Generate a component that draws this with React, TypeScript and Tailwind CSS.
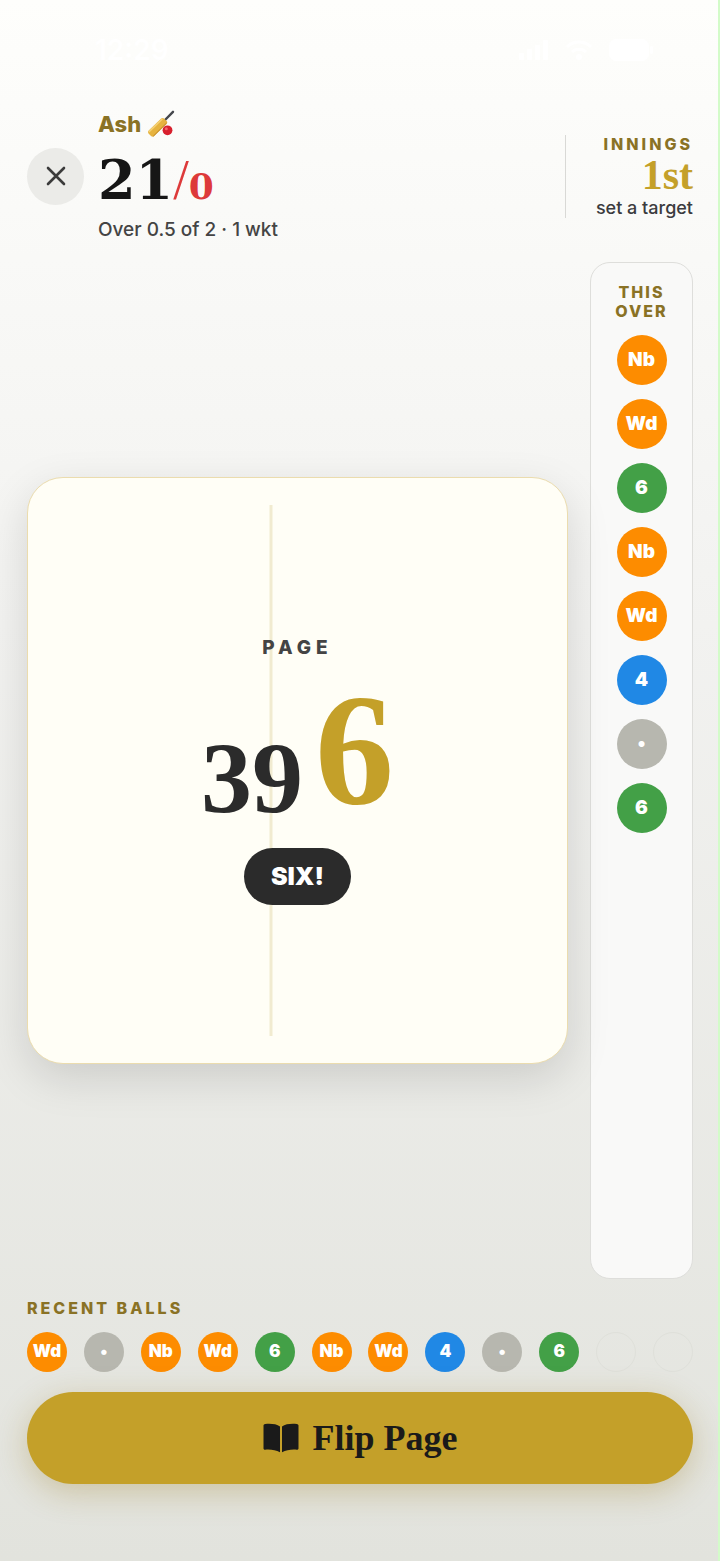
import { useState } from "react";
import clsx from "clsx";

type Ball = "Wd" | "Nb" | "•" | "4" | "6";

const BALL_COLOR: Record<Ball, string> = {
  Wd: "bg-[#fd8c00]",
  Nb: "bg-[#fd8c00]",
  "•": "bg-[#b7b7af]",
  "4": "bg-[#2088e5]",
  "6": "bg-[#43a047]",
};

const THIS_OVER: Ball[] = ["Nb", "Wd", "6", "Nb", "Wd", "4", "•", "6"];
const RECENT: (Ball | null)[] = ["Wd", "•", "Nb", "Wd", "6", "Nb", "Wd", "4", "•", "6", null, null];

const SERIF = "font-['Liberation_Serif',serif]";
const SCORE = "font-['DejaVu_Serif',serif] font-bold";
const LABEL = "text-base leading-[19px] font-extrabold text-[#8a7225]";

function BallChip({ ball, large }: { ball: Ball | null; large?: boolean }) {
  return (
    <li
      className={clsx(
        "flex shrink-0 items-center justify-center rounded-full font-black text-white",
        large ? "size-[50px] text-[19px]" : "size-10 text-[17px]",
        ball ? BALL_COLOR[ball] : "border border-[#dfe0da]"
      )}
    >
      {ball}
    </li>
  );
}

function StatusBar() {
  return (
    <div className="flex items-center justify-between pr-10 pl-[68px] text-white">
      <span className="text-[28px] leading-9 font-semibold">12:29</span>
      <div className="flex items-center gap-4">
        <svg width="30" height="20" viewBox="0 0 30 20" fill="currentColor" aria-hidden="true">
          <rect x="0" y="13" width="5" height="7" rx="1" />
          <rect x="8" y="9" width="5" height="11" rx="1" />
          <rect x="16" y="5" width="5" height="15" rx="1" />
          <rect x="24" y="0" width="5" height="20" rx="1" />
        </svg>
        <svg width="28" height="20" viewBox="0 0 28 20" fill="none" stroke="currentColor" strokeWidth="3" aria-hidden="true">
          <path d="M2 7a17 17 0 0 1 24 0M7 12a10 10 0 0 1 14 0" />
          <circle cx="14" cy="17" r="1.5" fill="currentColor" />
        </svg>
        <svg width="44" height="22" viewBox="0 0 44 22" fill="currentColor" aria-hidden="true">
          <rect width="40" height="22" rx="7" />
          <rect x="41" y="7" width="3" height="8" rx="1.5" />
        </svg>
      </div>
    </div>
  );
}

function CricketBat() {
  return (
    <svg width="28" height="28" viewBox="0 0 28 28" role="img" aria-label="cricket">
      <path d="M17.5 10.5 26 1.8" stroke="#45474c" strokeWidth="2.4" strokeLinecap="round" />
      <path d="M14.2 8.6c1-.9 2-.9 2.8-.2l2.8 2.9c.7.8.6 1.7-.2 2.6L7.2 26.1c-1 .9-2.2.8-3.2-.1L1.7 23.7c-.9-1-.9-2.1 0-3.1z" fill="#e6b33f" />
      <path d="M15 9.2 2.4 21.4" stroke="#f5d277" strokeWidth="1.5" strokeLinecap="round" />
      <path d="M19.3 13.3 6.5 26" stroke="#bf8527" strokeWidth="1" strokeLinecap="round" />
      <circle cx="20.5" cy="20.3" r="4.9" fill="#d8202d" />
      <circle cx="19.3" cy="18.8" r="1.5" fill="#f2686b" />
    </svg>
  );
}

function BookIcon() {
  return (
    <svg width="36" height="30" viewBox="0 0 36 30" fill="#1a1a1a" aria-hidden="true">
      <path d="M17 3.4C13.5 1 8 .5 2.2 1 1.3 1.1.5 1.7.5 2.6v22.6c0 1 .7 1.6 1.7 1.5 5.7-.4 10.5.3 14.8 2.5z" />
      <path d="M19 3.4C22.5 1 28 .5 33.800 1c.9.1 1.7.7 1.7 1.6v22.6c0 1-.7 1.6-1.7 1.5-5.7-.4-10.5.3-14.8 2.5z" />
    </svg>
  );
}

function Header({ onClose }: { onClose: () => void }) {
  return (
    <header className="mt-[42px] flex items-center">
      <button
        onClick={onClose}
        aria-label="Close"
        className="flex size-[57px] shrink-0 items-center justify-center rounded-full bg-[#ebebe8]"
      >
        <svg width="20" height="20" viewBox="0 0 20 20" stroke="#3b3b3b" strokeWidth="2.6" strokeLinecap="round" aria-hidden="true">
          <path d="M2 2 18 18M18 2 2 18" />
        </svg>
      </button>

      <div className="ml-3.5 flex-1">
        <div className="flex items-center gap-1.5 text-[22px] leading-7 font-extrabold text-[#8a7225]">
          Ash <CricketBat />
        </div>
        <div className="flex h-20 items-center pt-1 text-[#161616]">
          <span className="flex items-baseline leading-none">
            <span className={clsx(SCORE, "text-[54px]")}>21</span>
            <span className={clsx(SERIF, "text-[56px] text-[#dd3a3a]")}>/</span>
            <span className={clsx(SCORE, "text-[36px] text-[#dd3a3a]")}>0</span>
          </span>
        </div>
        <p className="text-[19px] leading-6 font-medium text-[#444]">Over 0.5 of 2 · 1 wkt</p>
      </div>

      <div className="flex flex-col items-end border-l border-[#d9d9d6] pl-[30px]">
        <span className={clsx(LABEL, "tracking-[3px]")}>INNINGS</span>
        <span className={clsx(SERIF, "text-[42px] leading-[43px] font-bold text-[#c4a029]")}>1st</span>
        <span className="text-lg leading-[21px] font-medium text-[#3b3b3e]">set a target</span>
      </div>
    </header>
  );
}

export default function App() {
  const [open, setOpen] = useState(true);
  if (!open) return null;

  return (
    <main className="flex min-h-screen flex-col border-r-2 border-[#d3fbc9] bg-linear-to-b from-[#fefefc] via-[#f2f2f0] via-40% to-[#e2e3dd] pt-8 pr-[25px] pb-[77px] pl-[27px] font-['Inter',sans-serif]">
      <StatusBar />
      <Header onClose={() => setOpen(false)} />

      <div className="mt-5 flex flex-1 gap-[22px]">
        {/* page card */}
        <section className="flex flex-1 items-center">
          <div className="relative flex aspect-[541/587] w-full flex-col items-center justify-center rounded-[36px] border border-[#ebdcae] bg-[#fffef6] shadow-[0_14px_44px_rgba(0,0,0,0.13)]">
            <div className="absolute inset-y-[27px] left-[45%] w-[3px] -translate-x-1/2 bg-[#f1ebd0]" />
            <span className="relative text-[19px] leading-6 font-extrabold tracking-[5px] text-[#444]">PAGE</span>
            <div className={clsx(SERIF, "relative mt-4 flex items-end gap-3 font-bold")}>
              <span className="pb-1 text-[102px] leading-[98px] text-[#2b2b2b]">39</span>
              <span className="pb-2 text-[158px] leading-[148px] text-[#c4a029]">6</span>
            </div>
            <span className="relative mt-4 rounded-full bg-[#2b2b2b] px-[27px] py-3.5 text-[25px] leading-[29px] font-black text-white">
              SIX!
            </span>
          </div>
        </section>

        <aside className="flex w-[103px] flex-col items-center rounded-[20px] border border-[#dededb] bg-[#f9f9f8] pt-5">
          <h2 className={clsx(LABEL, "text-center tracking-[2px]")}>
            THIS
            <br />
            OVER
          </h2>
          <ul className="mt-3.5 flex flex-col gap-3.5">
            {THIS_OVER.map((ball, i) => (
              <BallChip key={i} ball={ball} large />
            ))}
          </ul>
        </aside>
      </div>

      {/* recent balls */}
      <h2 className={clsx(LABEL, "mt-5 tracking-[3px]")}>RECENT BALLS</h2>
      <ul className="mt-3.5 flex justify-between">
        {RECENT.map((ball, i) => (
          <BallChip key={i} ball={ball} />
        ))}
      </ul>

      <button
        className={clsx(
          SERIF,
          "mt-5 flex h-[92px] items-center justify-center gap-3.5 rounded-full bg-[#c4a029] text-[36px] font-bold text-[#1a1a1a] shadow-[0_8px_32px_rgba(150,115,20,0.3)]"
        )}
      >
        <BookIcon />
        Flip Page
      </button>
    </main>
  );
}
